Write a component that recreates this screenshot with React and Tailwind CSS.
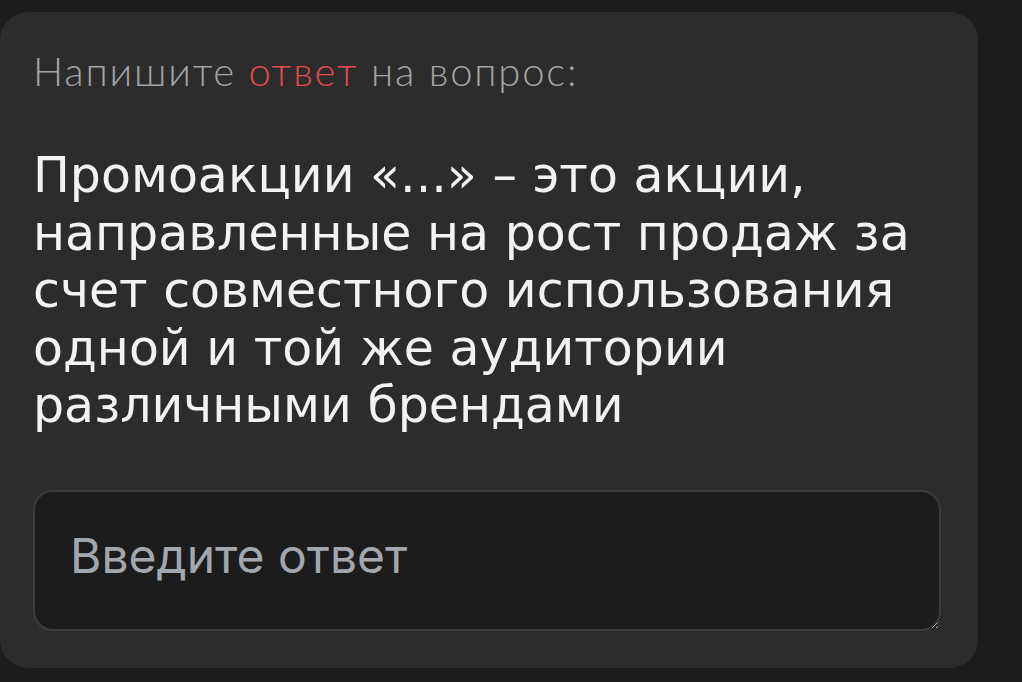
export default function App() {
  return (
    <div className="min-h-[682px] bg-[#1c1c1c] pt-[12px]">
      <div className="w-[978px] h-[656px] rounded-[28px] bg-[#2c2c2c] pl-[33px] pr-[38px] pt-[35px]">
        {/* prompt */}
        <p className="font-['Lato',sans-serif] font-light text-[40px] leading-[48px] tracking-[1.8px] text-[#a3a3a3]">
          Напишите <span className="text-[#e5484f]">ответ</span> на вопрос:
        </p>

        {/* question */}
        <p className="mt-[52px] font-['DejaVu_Sans',sans-serif] text-[49px] leading-[57.5px] text-[#f2f2f2]">
          Промоакции «...» – это акции, направленные на рост продаж за счет совместного использования одной и той же аудитории различными брендами
        </p>

        <textarea
          placeholder="Введите ответ"
          className="mt-[55px] block w-[908px] h-[141px] rounded-[20px] border-2 border-[#3b3b3b] bg-[#1c1c1c] px-[35px] pt-[36px] font-['Inter',sans-serif] text-[48px] leading-[56px] text-white placeholder:text-[#a2a6ad] outline-none"
        />
      </div>
    </div>
  )
}
